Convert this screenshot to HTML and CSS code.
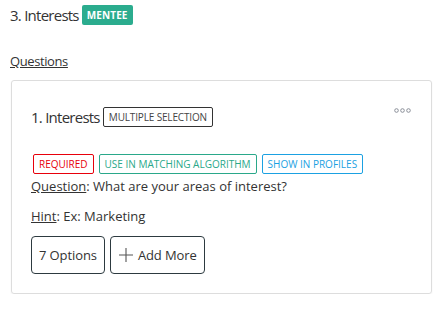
FILE: index.html
```html
<!DOCTYPE html>
<html>
<head>
<meta charset="utf-8">
<link rel="stylesheet" href="styles.css">
</head>
<body>
<div class="page">
  <div class="section-title">
    <span class="title-text">3. Interests</span>
    <span class="badge badge-mentee">MENTEE</span>
  </div>
  <div class="questions-link"><a href="#">Questions</a></div>
  <div class="card">
    <div class="card-head">
      <div class="q-title">
        <span class="q-name">1. Interests</span>
        <span class="tag tag-dark">MULTIPLE SELECTION</span>
      </div>
      <div class="more" aria-label="more">
        <svg width="17" height="5" viewBox="0 0 17 5"><circle cx="2.5" cy="2.5" r="1.8" fill="none" stroke="#8a8f99" stroke-width="1"/><circle cx="8.5" cy="2.5" r="1.8" fill="none" stroke="#8a8f99" stroke-width="1"/><circle cx="14.5" cy="2.5" r="1.8" fill="none" stroke="#8a8f99" stroke-width="1"/></svg>
      </div>
    </div>
    <div class="tags">
      <span class="tag tag-red">REQUIRED</span>
      <span class="tag tag-teal">USE IN MATCHING ALGORITHM</span>
      <span class="tag tag-blue">SHOW IN PROFILES</span>
    </div>
    <p class="line"><span class="label">Question</span>: What are your areas of interest?</p>
    <p class="line hint"><span class="label">Hint</span>: Ex: Marketing</p>
    <div class="actions">
      <button class="btn">7 Options</button>
      <button class="btn"><svg class="plus" width="16" height="16" viewBox="0 0 16 16"><path d="M8 1v14M1 8h14" stroke="#555" stroke-width="1.1" fill="none"/></svg>Add More</button>
    </div>
  </div>
</div>
</body>
</html>
```
FILE: styles.css
```css
* { box-sizing: border-box; }
body {
  margin: 0;
  background: #fff;
  font-family: "Open Sans", "Noto Sans", sans-serif;
  color: #333;
}
.page {
  padding: 5px 11px 0 10px;
}
.section-title {
  display: flex;
  align-items: center;
  gap: 3px;
  height: 20px;
}
.title-text {
  font-size: 15px;
  color: #333;
  letter-spacing: -0.75px;
}
.badge {
  display: inline-flex;
  align-items: center;
  height: 20px;
  padding: 0 5px;
  border-radius: 2px;
  font-size: 10px;
  font-weight: 700;
  color: #fff;
  letter-spacing: 0.1px;
}
.badge-mentee { background: #2bac8e; }
.questions-link {
  margin-top: 27px;
  height: 20px;
  font-size: 13px;
  letter-spacing: -0.4px;
}
.questions-link a {
  color: #333;
  text-decoration: underline;
}
.card {
  margin-top: 8px;
  margin-left: 1px;
  border: 1px solid #ddd;
  border-radius: 3px;
  box-shadow: 0 1px 2px rgba(0,0,0,0.06);
  padding: 26px 20px 19px 19px;
}
.card-head {
  display: flex;
  justify-content: space-between;
  align-items: flex-start;
}
.q-title {
  display: flex;
  align-items: center;
  gap: 3px;
}
.q-name {
  font-size: 15px;
  color: #333;
  letter-spacing: -0.75px;
}
.more {
  margin-right: 0;
  line-height: 0;
}
.tag {
  display: inline-flex;
  align-items: center;
  height: 20px;
  padding: 0 5px;
  border: 1px solid;
  border-radius: 2px;
  font-size: 10px;
  line-height: 1;
}
.tag-dark { border-color: #333; color: #444; letter-spacing: -0.15px; }
.tag-red { border-color: #e8000b; color: #e8000b; }
.tag-teal { border-color: #2aa88a; color: #2aa88a; }
.tag-blue { border-color: #1ba1e2; color: #1ba1e2; }
.tags {
  display: flex;
  gap: 5px;
  margin-top: 27px;
  margin-left: 2px;
}
.line {
  margin: 2px 0 0;
  font-size: 13px;
  line-height: 20px;
  color: #333;
}
.line.hint { margin-top: 10px; }
.label { text-decoration: underline; }
.actions {
  display: flex;
  gap: 5px;
  margin-top: 10px;
}
.btn {
  display: inline-flex;
  align-items: center;
  gap: 4px;
  height: 38px;
  padding: 0 7px;
  border: 1px solid #2d3a40;
  border-radius: 4px;
  background: #fff;
  font-family: inherit;
  font-size: 13px;
  color: #333;
  letter-spacing: -0.1px;
  cursor: pointer;
}
.plus { flex: none; }
```
